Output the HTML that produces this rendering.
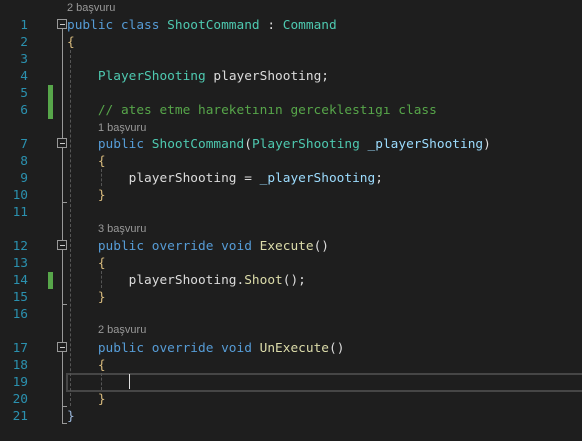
<!DOCTYPE html>
<html><head><meta charset="utf-8"><style>
body{margin:0;width:582px;height:441px;background:#1e1e1e;overflow:hidden;position:relative;font-family:"DejaVu Sans Mono","Liberation Mono",monospace;}
.r{position:absolute;left:0;height:17px;line-height:17px;white-space:pre;font-size:12.8px;color:#dcdcdc}
.n{position:absolute;width:28px;text-align:right;left:0;color:#2b91af;font-size:12.8px;line-height:17px;height:17px}
.c{position:absolute;left:67px}
.cl{position:absolute;font-family:"Liberation Sans",sans-serif;font-size:11px;color:#999;line-height:17px}
.k{color:#569cd6}.t{color:#4ec9b0}.m{color:#dcdcaa}.g{color:#57a64a}.b{color:#d7ba7d}.p{color:#9cdcfe}
.fold{position:absolute;left:57px;width:8px;height:8px;border:1px solid #999;box-sizing:content-box}
.fold:after{content:"";position:absolute;left:2px;top:4px;width:5px;height:1px;background:#ccc}
.vl{position:absolute;width:1px;background:#999;left:62px}
.dg{position:absolute;width:0;border-left:1px dashed #555}
.gb{position:absolute;left:48px;width:5px;background:#57a64a}
</style></head><body>
<div class="cl" style="left:67px;top:0">2 başvuru</div>
<div class="r" style="top:17px"><span class="n">1</span><span class="c"><span class="k">public class</span> <span class="t">ShootCommand</span> : <span class="t">Command</span></span></div>
<div class="r" style="top:34px"><span class="n">2</span><span class="c"><span class="b">{</span></span></div>
<div class="r" style="top:51px"><span class="n">3</span></div>
<div class="r" style="top:68px"><span class="n">4</span><span class="c">    <span class="t">PlayerShooting</span> playerShooting;</span></div>
<div class="r" style="top:85px"><span class="n">5</span></div>
<div class="r" style="top:102px"><span class="n">6</span><span class="c">    <span class="g">// ates etme hareketının gerceklestıgı class</span></span></div>
<div class="cl" style="left:98px;top:120px">1 başvuru</div>
<div class="r" style="top:136px"><span class="n">7</span><span class="c">    <span class="k">public</span> <span class="t">ShootCommand</span>(<span class="t">PlayerShooting</span> <span class="p">_playerShooting</span>)</span></div>
<div class="r" style="top:153px"><span class="n">8</span><span class="c">    <span class="b">{</span></span></div>
<div class="r" style="top:170px"><span class="n">9</span><span class="c">        playerShooting = <span class="p">_playerShooting</span>;</span></div>
<div class="r" style="top:187px"><span class="n">10</span><span class="c">    <span class="b">}</span></span></div>
<div class="r" style="top:204px"><span class="n">11</span></div>
<div class="cl" style="left:98px;top:221px">3 başvuru</div>
<div class="r" style="top:238px"><span class="n">12</span><span class="c">    <span class="k">public override void</span> <span class="m">Execute</span>()</span></div>
<div class="r" style="top:255px"><span class="n">13</span><span class="c">    <span class="b">{</span></span></div>
<div class="r" style="top:272px"><span class="n">14</span><span class="c">        playerShooting.<span class="m">Shoot</span>();</span></div>
<div class="r" style="top:289px"><span class="n">15</span><span class="c">    <span class="b">}</span></span></div>
<div class="r" style="top:306px"><span class="n">16</span></div>
<div class="cl" style="left:98px;top:322px">2 başvuru</div>
<div class="r" style="top:340px"><span class="n">17</span><span class="c">    <span class="k">public override void</span> <span class="m">UnExecute</span>()</span></div>
<div class="r" style="top:357px"><span class="n">18</span><span class="c">    <span class="b">{</span></span></div>
<div style="position:absolute;left:66px;top:373px;width:520px;height:15px;border:2px solid #464646"></div>
<div style="position:absolute;left:129px;top:374px;width:1px;height:15px;background:#e0e0e0"></div>
<div class="r" style="top:374px"><span class="n">19</span></div>
<div class="r" style="top:391px"><span class="n">20</span><span class="c">    <span class="b">}</span></span></div>
<div class="r" style="top:408px"><span class="n">21</span><span class="c"><span class="p" style="color:#9cb8dc">}</span></span></div>
<div class="gb" style="top:85px;height:34px"></div>
<div class="gb" style="top:272px;height:17px"></div>
<div class="vl" style="top:29px;height:395px"></div>
<div style="position:absolute;left:62px;top:423px;width:5px;height:1px;background:#999"></div>
<div style="position:absolute;left:62px;top:202px;width:5px;height:1px;background:#999"></div>
<div style="position:absolute;left:62px;top:304px;width:5px;height:1px;background:#999"></div>
<div style="position:absolute;left:62px;top:406px;width:5px;height:1px;background:#999"></div>
<div class="fold" style="top:19px;background:#1e1e1e"></div>
<div class="fold" style="top:138px;background:#1e1e1e"></div>
<div class="fold" style="top:240px;background:#1e1e1e"></div>
<div class="fold" style="top:342px;background:#1e1e1e"></div>
<div class="dg" style="left:70px;top:50px;height:356px"></div>
<div class="dg" style="left:101px;top:169px;height:17px"></div>
<div class="dg" style="left:101px;top:271px;height:17px"></div>
<div class="dg" style="left:101px;top:373px;height:17px"></div>
</body></html>
